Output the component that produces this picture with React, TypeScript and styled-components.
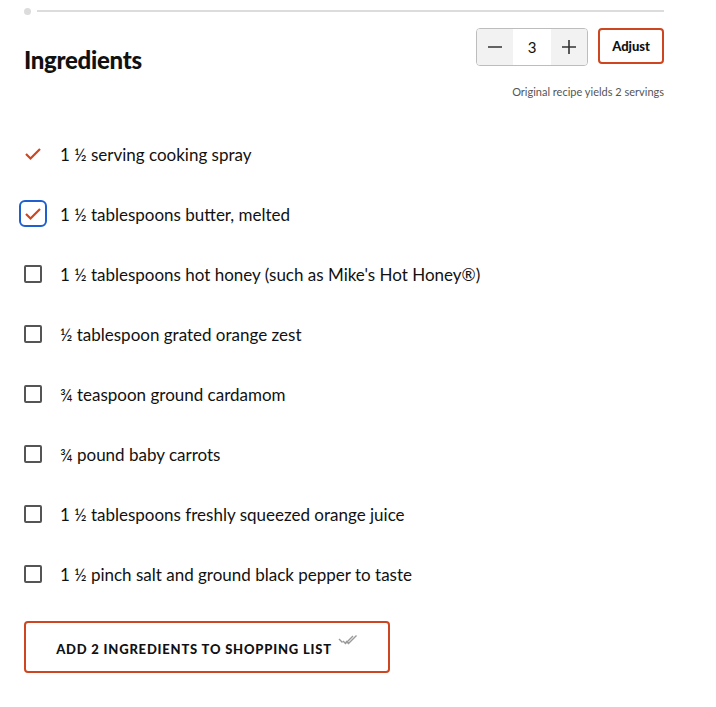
import React, { useState } from "react";
import styled, { createGlobalStyle } from "styled-components";

const GlobalStyle = createGlobalStyle`
  body {
    margin: 0;
    background: #fff;
    font-family: Lato, "Liberation Sans", sans-serif;
    color: #111;
  }
`;

const RED = "#ce4620";

const Page = styled.section`
  width: 640px;
  padding: 0 0 0 24px;
`;

const Divider = styled.div`
  display: flex;
  align-items: center;
  gap: 6px;
  height: 22px;
  &::before {
    content: "";
    width: 7px;
    height: 7px;
    border-radius: 50%;
    background: #dcdcdc;
  }
  &::after {
    content: "";
    flex: 1;
    height: 2px;
    background: #dcdcdc;
  }
`;

const Header = styled.div`
  display: flex;
  justify-content: space-between;
  align-items: flex-start;
  margin-top: 6px;
`;

const Title = styled.h2`
  margin: 20px 0 0;
  font-size: 24px;
  font-weight: 900;
  letter-spacing: -0.3px;
  line-height: 1;
`;

const ServingsBox = styled.div`
  display: flex;
  flex-direction: column;
  align-items: flex-end;
`;

const Controls = styled.div`
  display: flex;
  gap: 10px;
`;

const Stepper = styled.div`
  display: flex;
  height: 36px;
  border: 1px solid #bdbdbd;
  border-radius: 4px;
  overflow: hidden;
`;

const StepButton = styled.button`
  width: 36px;
  border: none;
  background: #f2f2f2;
  display: flex;
  align-items: center;
  justify-content: center;
  padding: 0;
`;

const Count = styled.div`
  width: 38px;
  background: #fff;
  display: flex;
  align-items: center;
  justify-content: center;
  font-size: 15px;
`;

const AdjustButton = styled.button`
  height: 36px;
  padding: 0 12px;
  background: #fff;
  border: 2px solid ${RED};
  border-radius: 4px;
  font-family: Lato, "Liberation Sans", sans-serif;
  font-weight: 900;
  font-size: 13px;
  color: #111;
`;

const Yields = styled.p`
  margin: 19px 0 0;
  font-size: 11px;
  color: #555;
`;

const List = styled.ul`
  list-style: none;
  margin: 45px 0 0;
  padding: 0;
  display: flex;
  flex-direction: column;
  gap: 38px;
`;

const Item = styled.li`
  display: flex;
  align-items: center;
  gap: 18px;
  height: 22px;
  font-size: 17px;
`;

const Box = styled.span<{ $checked: boolean; $focus: boolean }>`
  position: relative;
  width: 18px;
  height: 18px;
  box-sizing: border-box;
  flex: none;
  border: 2px solid ${(p) => (p.$checked ? "transparent" : "#555")};
  border-radius: 2px;
  display: flex;
  align-items: center;
  justify-content: center;
  &::after {
    content: "";
    display: ${(p) => (p.$focus ? "block" : "none")};
    position: absolute;
    inset: -7px -7px -6px -7px;
    border: 2px solid #1f5fd0;
    border-radius: 6px;
  }
`;

const CheckSvg = styled.svg`
  flex: none;
  display: block;
`;

const AddButton = styled.button`
  margin-top: 36px;
  width: 366px;
  height: 52px;
  background: #fff;
  border: 2px solid ${RED};
  border-radius: 4px;
  display: flex;
  align-items: center;
  justify-content: center;
  gap: 6px;
  font-family: Lato, "Liberation Sans", sans-serif;
  font-weight: 900;
  font-size: 13px;
  letter-spacing: 0.8px;
  color: #111;
  padding: 4px 12px 0;
`;

const Check = () => (
  <CheckSvg width="18" height="14" viewBox="0 0 18 14">
    <path d="M2 7 L6.5 11.5 L16 2" fill="none" stroke={RED} strokeWidth="2.2" />
  </CheckSvg>
);

const DoubleCheck = () => (
  <CheckSvg width="20" height="12" viewBox="0 0 20 12" style={{ marginTop: -18 }}>
    <path d="M1 5 L4.5 8.5 M5 7 L7.5 9.5 L15 2 M8 7 L10.5 9.5 L18.5 1.5" fill="none" stroke="#999" strokeWidth="1.4" />
  </CheckSvg>
);

const ingredients = [
  "1 ½ serving cooking spray",
  "1 ½ tablespoons butter, melted",
  "1 ½ tablespoons hot honey (such as Mike's Hot Honey®)",
  "½ tablespoon grated orange zest",
  "¾ teaspoon ground cardamom",
  "¾ pound baby carrots",
  "1 ½ tablespoons freshly squeezed orange juice",
  "1 ½ pinch salt and ground black pepper to taste",
];

export default function App() {
  const [checked] = useState([true, true, false, false, false, false, false, false]);
  return (
    <Page>
      <GlobalStyle />
      <Divider />
      <Header>
        <Title>Ingredients</Title>
        <ServingsBox>
          <Controls>
            <Stepper>
              <StepButton aria-label="decrease">
                <svg width="16" height="16" viewBox="0 0 16 16">
                  <path d="M1 8 H15" stroke="#333" strokeWidth="1.6" />
                </svg>
              </StepButton>
              <Count>3</Count>
              <StepButton aria-label="increase">
                <svg width="16" height="16" viewBox="0 0 16 16">
                  <path d="M1 8 H15 M8 1 V15" stroke="#333" strokeWidth="1.6" />
                </svg>
              </StepButton>
            </Stepper>
            <AdjustButton>Adjust</AdjustButton>
          </Controls>
          <Yields>Original recipe yields 2 servings</Yields>
        </ServingsBox>
      </Header>
      <List>
        {ingredients.map((text, i) => (
          <Item key={text}>
            <Box $checked={checked[i]} $focus={i === 1}>
              {checked[i] && <Check />}
            </Box>
            {text}
          </Item>
        ))}
      </List>
      <AddButton>
        ADD 2 INGREDIENTS TO SHOPPING LIST
        <DoubleCheck />
      </AddButton>
    </Page>
  );
}
